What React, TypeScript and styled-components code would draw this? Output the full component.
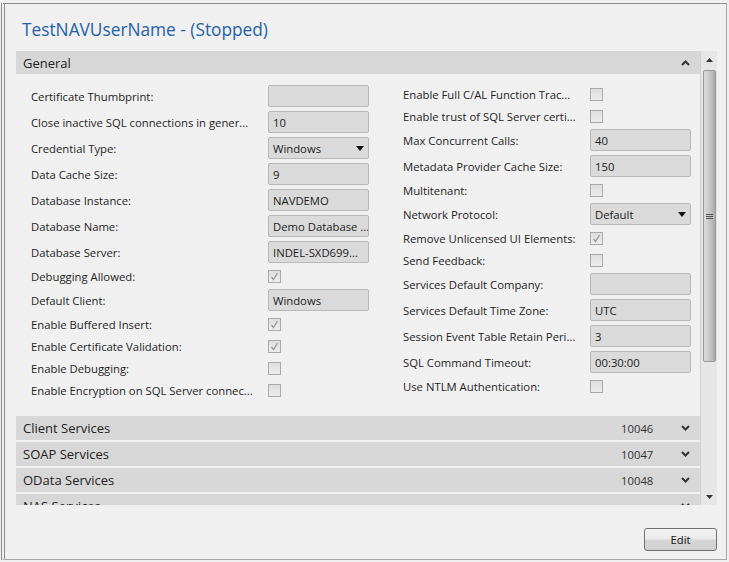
import React from "react";
import styled, { createGlobalStyle } from "styled-components";

const GlobalStyle = createGlobalStyle`
  html, body {
    margin: 0;
    padding: 0;
    background: #f0f0f0;
  }
  body {
    font-family: "Open Sans", "Noto Sans", sans-serif;
    color: #1e1e1e;
  }
`;

const Frame = styled.div`
  box-sizing: border-box;
  margin: 3px 2px 0 1px;
  height: 557px;
  padding: 0 9px 0 11px;
  border-top: 1px solid #8c8c8c;
  border-left: 4px double #8c8c8c;
  border-right: 1px solid #a8a8a8;
  border-bottom: 1px solid #a8a8a8;
  display: flex;
  flex-direction: column;
`;

const Title = styled.div`
  box-sizing: border-box;
  height: 47px;
  padding: 3px 0 0 6px;
  display: flex;
  align-items: center;
  font-size: 17.3px;
  color: #2461a5;
`;

const ScrollArea = styled.div`
  height: 454px;
  display: flex;
`;

const Content = styled.div`
  flex: 1;
  overflow: hidden;
`;

const SectionBar = styled.div<{ $open?: boolean }>`
  box-sizing: border-box;
  height: ${(p) => (p.$open ? 23 : 24)}px;
  margin-bottom: ${(p) => (p.$open ? 0 : 2)}px;
  background: #d7d7d7;
  display: flex;
  align-items: center;
  padding: 0 10px 0 7px;
  font-size: 13px;
  color: #222;
`;

const SectionName = styled.span`
  flex: 1;
`;

const Port = styled.span`
  width: 60px;
  font-size: 11.3px;
  color: #333;
`;

const Chevron = styled.svg`
  width: 9px;
  height: 6px;
`;

const Body = styled.div`
  display: grid;
  grid-template-columns: 372px 312px;
  padding: 9px 0 15px 15px;
`;

const Column = styled.div`
  display: flex;
  flex-direction: column;
`;

const Row = styled.div<{ $labelWidth: number; $tall?: boolean }>`
  display: grid;
  grid-template-columns: ${(p) => p.$labelWidth}px 100px;
  align-items: center;
  height: ${(p) => (p.$tall ? 26 : 22)}px;
  font-size: 11.3px;
`;

const Label = styled.span`
  white-space: nowrap;
`;

const ValueBox = styled.div`
  box-sizing: border-box;
  height: 22px;
  width: 101px;
  display: flex;
  align-items: center;
  padding: 0 4px;
  background: #dadada;
  border: 1px solid #b8b8b8;
  border-radius: 2px;
  font-size: 11.3px;
  color: #1a1a1a;
  white-space: nowrap;
  overflow: hidden;
`;

const SelectText = styled.span`
  flex: 1;
`;

const Check = styled.div`
  box-sizing: border-box;
  width: 13px;
  height: 13px;
  border: 1px solid #aaaaaa;
  background: linear-gradient(#dedede, #ececec);
  display: flex;
  align-items: center;
  justify-content: center;
`;

const ScrollBar = styled.div`
  width: 17px;
  box-sizing: border-box;
  border-left: 1px solid #d2d2d2;
  background: #e6e6e6;
  display: flex;
  flex-direction: column;
  align-items: center;
`;

const ArrowButton = styled.div`
  height: 17px;
  width: 100%;
  display: flex;
  align-items: center;
  justify-content: center;
`;

const Thumb = styled.div`
  box-sizing: border-box;
  width: 13px;
  height: 292px;
  margin-top: 2px;
  border: 1px solid #979797;
  border-radius: 2px;
  background: linear-gradient(90deg, #dcdcdc, #c4c4c4 55%, #aaaaaa);
  display: flex;
  align-items: center;
  justify-content: center;
`;

const Spacer = styled.div`
  flex: 1;
`;

const Footer = styled.div`
  display: flex;
  justify-content: flex-end;
  padding-top: 23px;
`;

const EditButton = styled.button`
  box-sizing: border-box;
  width: 73px;
  height: 23px;
  border: 1px solid #707070;
  border-radius: 3px;
  background: linear-gradient(#f2f2f2 0%, #ebebeb 45%, #d6d6d6 55%, #cfcfcf 100%);
  font-family: "Open Sans", "Noto Sans", sans-serif;
  font-size: 11.3px;
  color: #111;
  padding: 0;
`;

type Field =
  | { label: string; kind: "text"; value: string }
  | { label: string; kind: "select"; value: string }
  | { label: string; kind: "check"; checked?: boolean };

const leftFields: Field[] = [
  { label: "Certificate Thumbprint:", kind: "text", value: "" },
  { label: "Close inactive SQL connections in gener...", kind: "text", value: "10" },
  { label: "Credential Type:", kind: "select", value: "Windows" },
  { label: "Data Cache Size:", kind: "text", value: "9" },
  { label: "Database Instance:", kind: "text", value: "NAVDEMO" },
  { label: "Database Name:", kind: "text", value: "Demo Database ..." },
  { label: "Database Server:", kind: "text", value: "INDEL-SXD699..." },
  { label: "Debugging Allowed:", kind: "check", checked: true },
  { label: "Default Client:", kind: "text", value: "Windows" },
  { label: "Enable Buffered Insert:", kind: "check", checked: true },
  { label: "Enable Certificate Validation:", kind: "check", checked: true },
  { label: "Enable Debugging:", kind: "check" },
  { label: "Enable Encryption on SQL Server connec...", kind: "check" },
];

const rightFields: Field[] = [
  { label: "Enable Full C/AL Function Trac...", kind: "check" },
  { label: "Enable trust of SQL Server certi...", kind: "check" },
  { label: "Max Concurrent Calls:", kind: "text", value: "40" },
  { label: "Metadata Provider Cache Size:", kind: "text", value: "150" },
  { label: "Multitenant:", kind: "check" },
  { label: "Network Protocol:", kind: "select", value: "Default" },
  { label: "Remove Unlicensed UI Elements:", kind: "check", checked: true },
  { label: "Send Feedback:", kind: "check" },
  { label: "Services Default Company:", kind: "text", value: "" },
  { label: "Services Default Time Zone:", kind: "text", value: "UTC" },
  { label: "Session Event Table Retain Peri...", kind: "text", value: "3" },
  { label: "SQL Command Timeout:", kind: "text", value: "00:30:00" },
  { label: "Use NTLM Authentication:", kind: "check" },
];

const services = [
  { name: "Client Services", port: "10046" },
  { name: "SOAP Services", port: "10047" },
  { name: "OData Services", port: "10048" },
  { name: "NAS Services", port: "" },
];

function ChevronIcon({ up }: { up?: boolean }) {
  return (
    <Chevron viewBox="0 0 9 6">
      <polyline
        points={up ? "1,5 4.5,1.5 8,5" : "1,1 4.5,4.5 8,1"}
        fill="none"
        stroke="#333"
        strokeWidth="2"
      />
    </Chevron>
  );
}

function CheckMark() {
  return (
    <svg width="9" height="9" viewBox="0 0 9 9">
      <polyline points="1.5,5 3.5,7.5 7.5,1" fill="none" stroke="#9a9a9a" strokeWidth="1.3" />
    </svg>
  );
}

function DropTriangle() {
  return (
    <svg width="8" height="5" viewBox="0 0 8 5">
      <polygon points="0,0 8,0 4,5" fill="#111" />
    </svg>
  );
}

function FieldRow({ field, labelWidth }: { field: Field; labelWidth: number }) {
  return (
    <Row $labelWidth={labelWidth} $tall={field.kind !== "check"}>
      <Label>{field.label}</Label>
      {field.kind === "check" ? (
        <Check>{field.checked && <CheckMark />}</Check>
      ) : field.kind === "select" ? (
        <ValueBox>
          <SelectText>{field.value}</SelectText>
          <DropTriangle />
        </ValueBox>
      ) : (
        <ValueBox>{field.value}</ValueBox>
      )}
    </Row>
  );
}

function ScrollTriangle({ up }: { up?: boolean }) {
  return (
    <svg width="7" height="4" viewBox="0 0 7 4">
      <polygon points={up ? "0,4 7,4 3.5,0" : "0,0 7,0 3.5,4"} fill="#333" />
    </svg>
  );
}

export default function App() {
  return (
    <>
      <GlobalStyle />
      <Frame>
        <Title>TestNAVUserName - (Stopped)</Title>
        <ScrollArea>
          <Content>
            <SectionBar $open>
              <SectionName>General</SectionName>
              <ChevronIcon up />
            </SectionBar>
            <Body>
              <Column>
                {leftFields.map((f) => (
                  <FieldRow key={f.label} field={f} labelWidth={237} />
                ))}
              </Column>
              <Column>
                {rightFields.map((f) => (
                  <FieldRow key={f.label} field={f} labelWidth={187} />
                ))}
              </Column>
            </Body>
            {services.map((s) => (
              <SectionBar key={s.name}>
                <SectionName>{s.name}</SectionName>
                <Port>{s.port}</Port>
                <ChevronIcon />
              </SectionBar>
            ))}
          </Content>
          <ScrollBar>
            <ArrowButton>
              <ScrollTriangle up />
            </ArrowButton>
            <Thumb>
              <svg width="7" height="7" viewBox="0 0 7 7">
                <path d="M0 1.5H7M0 3.5H7M0 5.5H7" stroke="#555" strokeWidth="1" />
              </svg>
            </Thumb>
            <Spacer />
            <ArrowButton>
              <ScrollTriangle />
            </ArrowButton>
          </ScrollBar>
        </ScrollArea>
        <Footer>
          <EditButton>Edit</EditButton>
        </Footer>
      </Frame>
    </>
  );
}
